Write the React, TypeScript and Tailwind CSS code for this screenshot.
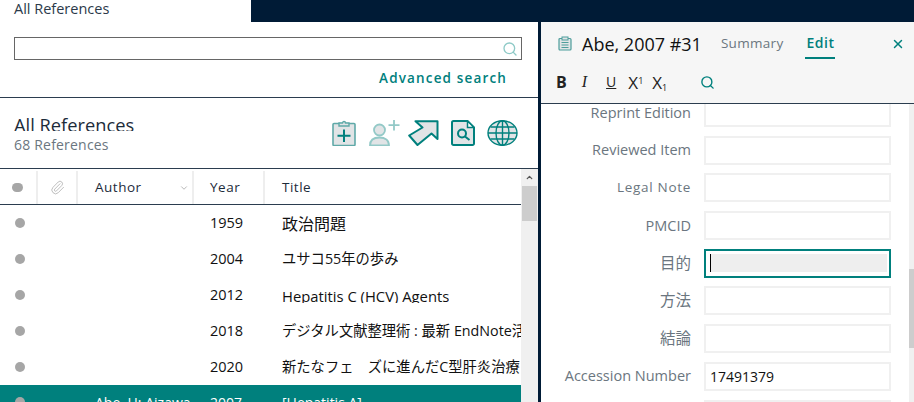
import React from "react";
import {Search, X, ChevronDown, ChevronUp, Paperclip} from "lucide-react";

const FONT = "font-['Open_Sans','Noto_Sans_CJK_JP',sans-serif]";

const rows = [
    {year: "1959", title: "政治問題", cls: "text-[16px] pt-[1px]"},
    {year: "2004", title: "ユサコ55年の歩み", cls: "text-[14.300px]"},
    {year: "2012", title: "Hepatitis C (HCV) Agents", cls: "text-[14.800px] h-[15px] leading-[16px] overflow-hidden"},
    {year: "2018", title: "デジタル文献整理術 : 最新 EndNote活用", cls: "text-[14.300px]"},
    {year: "2020", title: "新たなフェ　ズに進んだC型肝炎治療", cls: "text-[14.300px]"},
];

const fields = [
    {label: "Reprint Edition"},
    {label: "Reviewed Item"},
    {label: "Legal Note", cls: "text-[13.500px] tracking-[0.7px] pb-[1px]"},
    {label: "PMCID"},
    {label: "目的", cls: "text-[15.500px]", active: true},
    {label: "方法", cls: "text-[15.500px]"},
    {label: "結論", cls: "text-[15.500px]"},
    {label: "Accession Number", value: "17491379"},
    {label: ""},
];

function AddIcon() {
    return (
        <svg width="24" height="26" viewBox="0 0 24 26" className="shrink-0">
            <rect x="1" y="3.500" width="22" height="22" rx="1" fill="#e1e4e6" stroke="#5fa9a8" strokeWidth="1.600"/>
            <path d="M7 6V3h3.500a1.500 1.500 0 0 1 3 0H17v3z" fill="#e1e4e6" stroke="#5fa9a8" strokeWidth="1.400"/>
            <path d="M12 9.500v12.500M5.500 15.800h13" stroke="#00807d" strokeWidth="2"/>
        </svg>
    );
}

function UserAddIcon() {
    return (
        <svg width="31" height="26" viewBox="0 0 31 26" className="ml-[13px] shrink-0">
            <circle cx="10.500" cy="10" r="5.500" fill="#e1e4e6" stroke="#93c9c7" strokeWidth="1.800"/>
            <path d="M1 25.500c0-5.500 4-8 9.500-8s9.500 2.500 9.500 8z" fill="#e1e4e6" stroke="#93c9c7" strokeWidth="1.800"/>
            <path d="M25 0v10.500M19.500 5.200h11" stroke="#93c9c7" strokeWidth="1.800"/>
        </svg>
    );
}

function ShareIcon() {
    return (
        <svg width="31" height="26" viewBox="0 0 31 26" className="ml-[8px] shrink-0">
            <path d="M7.500 1.200H29.500V19L23.500 13.500L9.500 25L1.200 15.500L14.500 7.500Z" fill="#e1e4e6" stroke="#00807d" strokeWidth="2" strokeLinejoin="round"/>
        </svg>
    );
}

function DocSearchIcon() {
    return (
        <svg width="24" height="26" viewBox="0 0 24 26" className="ml-[12px] shrink-0">
            <path d="M2.500 1H16.500L23 7.500V23.500a1.500 1.500 0 0 1-1.500 1.500H2.500A1.500 1.500 0 0 1 1 23.500V2.500A1.500 1.500 0 0 1 2.500 1z" fill="#e1e4e6" stroke="#00807d" strokeWidth="2"/>
            <path d="M16.500 1V7.500H23z" fill="#fff" stroke="#00807d" strokeWidth="1.500"/>
            <circle cx="11" cy="13.500" r="4" fill="none" stroke="#00807d" strokeWidth="2"/>
            <path d="M14 16.500l4.500 3.500" stroke="#00807d" strokeWidth="2"/>
        </svg>
    );
}

function GlobeIcon() {
    return (
        <svg width="31" height="26" viewBox="0 0 31 26" fill="none" stroke="#00807d" strokeWidth="1.400" className="ml-[12px] shrink-0">
            <ellipse cx="15.500" cy="13" rx="14.500" ry="12.300" fill="#e1e4e6"/>
            <ellipse cx="15.500" cy="13" rx="6.500" ry="12.300"/>
            <path d="M15.500 1v24M1 13h29M3.500 7h24M3.500 19h24"/>
        </svg>
    );
}

function ClipboardSmall() {
    return (
        <svg width="14" height="15" viewBox="0 0 14 15">
            <rect x="1" y="2.500" width="12" height="11.500" rx="1" fill="#e1e4e6" stroke="#4d9d9b" strokeWidth="1.200"/>
            <rect x="4" y="1" width="6" height="3" fill="#e1e4e6" stroke="#4d9d9b"/>
            <path d="M3.500 6.500h7M3.500 9h7M3.500 11.500h7" stroke="#4d9d9b"/>
        </svg>
    );
}

export default function App() {
    return (
        <div className={`${FONT} w-[914px] h-[402px] overflow-hidden bg-white flex flex-col text-[#111]`}>

            {/* TOP BAR */}
            <div className="h-[22px] shrink-0 flex bg-[#001b36]">
                <div className="w-[251px] bg-white pl-[14px] text-[14.500px] leading-[18px] text-[#2b3a4a]">
                    All References
                </div>
            </div>

            <div className="flex flex-1 min-h-0">

                {/* LEFT */}
                <div className="w-[538px] shrink-0 flex flex-col">

                    <div className="h-[76px] shrink-0 border-b border-[#2b3d4f] px-[14px] pt-[15px]">
                        <div className="w-[508px] h-[23px] border border-[#666] flex items-center justify-end pr-[3px]">
                            <Search size={16} strokeWidth={2} className="text-[#8ecac7]"/>
                        </div>
                        <p className="mt-[9px] pr-[17px] text-right text-[13.500px] leading-[18px] font-semibold tracking-[1.150px] text-[#00807d]">
                            Advanced search
                        </p>
                    </div>

                    <div className="h-[71px] shrink-0 flex justify-between border-b border-[#2b3d4f] pl-[14px] pr-[20px]">
                        <div className="pt-[16px]">
                            <p className="h-[17px] overflow-hidden text-[18.300px] leading-[21px] text-[#1c2b3a]">All References</p>
                            <p className="mt-[5px] text-[14px] leading-[18px] tracking-[0.2px] text-[#6b7680]">68 References</p>
                        </div>
                        <div className="flex items-start pt-[22px]">
                            <AddIcon/>
                            <UserAddIcon/>
                            <ShareIcon/>
                            <DocSearchIcon/>
                            <GlobeIcon/>
                        </div>
                    </div>

                    <div className="flex flex-1 min-h-0">

                        <div className="w-[521px] shrink-0 overflow-hidden">

                            {/* HEADER */}
                            <div className="h-[36px] pt-[2px] border-b border-[#2b3d4f] flex items-center text-[13.500px] tracking-[0.5px] text-[#1c2b3a]">
                                <div className="w-[38px] h-full flex items-center justify-center border-r-2 border-[#eee]">
                                    <span className="w-[11px] h-[9px] rounded-full bg-[#a6a6a6] -ml-[2px]"/>
                                </div>
                                <div className="w-[40px] h-full flex items-center justify-center border-r-2 border-[#eee]">
                                    <Paperclip size={15} strokeWidth={1.200} className="text-[#aaa]"/>
                                </div>
                                <div className="w-[116px] h-full flex items-center justify-between pl-[17px] pr-[3px] border-r-2 border-[#eee]">
                                    <span>Author</span>
                                    <ChevronDown size={10} className="text-[#aaa]"/>
                                </div>
                                <div className="w-[71px] h-full flex items-center pl-[16px] border-r-2 border-[#eee]">Year</div>
                                <div className="pl-[17px]">Title</div>
                            </div>

                            {/* ROWS */}
                            {rows.map((row) => (
                                <div key={row.year} className="h-[36px] flex items-center text-[14.500px] whitespace-nowrap">
                                    <div className="w-[40px] pl-[15px] shrink-0">
                                        <span className="block w-[10px] h-[10px] rounded-full bg-[#a6a6a6]"/>
                                    </div>
                                    <div className="w-[170px] shrink-0"/>
                                    <div className="w-[72px] shrink-0">{row.year}</div>
                                    <div className={row.cls}>{row.title}</div>
                                </div>
                            ))}

                            <div className="h-[36px] bg-[#00807d] flex items-center pb-[2px] text-[14px] text-white whitespace-nowrap">
                                <div className="w-[40px] pl-[15px] shrink-0">
                                    <span className="block w-[10px] h-[10px] rounded-full bg-[#a6a6a6]"/>
                                </div>
                                <div className="w-[55px] shrink-0"/>
                                <div className="w-[115px] shrink-0 overflow-hidden">Abe, H; Aizawa</div>
                                <div className="w-[72px] shrink-0">2007</div>
                                <div>[Hepatitis A]</div>
                            </div>
                        </div>

                        {/* SCROLLBAR */}
                        <div className="w-[17px] shrink-0 bg-[#f0f0f0] flex flex-col">
                            <div className="h-[17px] flex items-center justify-center">
                                <ChevronUp size={9} strokeWidth={3.500} className="text-[#555]"/>
                            </div>
                            <div className="h-[35px] bg-[#cdcdcd] mx-[1px]"/>
                        </div>
                    </div>
                </div>

                {/* RIGHT */}
                <div className="flex-1 min-w-0 border-l-[3px] border-[#001b36] flex flex-col">

                    <div className="h-[82px] shrink-0 bg-[#f6f6f6] border-b border-[#2b3d4f]">
                        <div className="h-[43px] flex items-center pl-[17px] pr-[9px]">
                            <ClipboardSmall/>
                            <span className="ml-[10px] text-[18px] leading-[24px]">Abe, 2007 #31</span>
                            <span className="ml-[19px] text-[13.500px] tracking-[0.3px] text-[#6b7680]">Summary</span>
                            <div className="ml-[22px] self-start h-[37px] pt-[12px] border-b-2 border-[#00807d] px-[1px] text-[14px] leading-[18px] font-semibold tracking-[0.5px] text-[#00807d]">
                                Edit
                            </div>
                            <X size={14} strokeWidth={2.500} className="ml-auto text-[#00807d]"/>
                        </div>
                        <div className="flex items-center h-[18px] mt-[8px] pl-[15px] text-[#222]">
                            <span className="text-[16px] font-bold leading-none">B</span>
                            <span className="ml-[15px] text-[16px] italic leading-none font-['Liberation_Serif',serif]">I</span>
                            <span className="ml-[19px] text-[14px] underline leading-none">U</span>
                            <span className="ml-[12px] text-[17px] leading-none">X<sup className="text-[9px]">1</sup></span>
                            <span className="ml-[9px] text-[17px] leading-none">X<sub className="text-[9px]">1</sub></span>
                            <Search size={15} strokeWidth={2.200} className="ml-[33px] text-[#00807d]"/>
                        </div>
                    </div>

                    <div className="flex flex-1 min-h-0">
                        <div className="flex-1 overflow-hidden">
                            <div className="-mt-[6px] flex flex-col gap-[8.700px]">
                                {fields.map((field, i) => (
                                    <div key={i} className="h-[29px] flex items-center shrink-0">
                                        <div className={`w-[150px] shrink-0 text-right text-[#6b7680] ${field.cls ?? "text-[14.500px]"}`}>
                                            {field.label}
                                        </div>
                                        <div className={`ml-[13px] w-[187px] h-full flex items-center pl-[4px] border-2 ${field.active ? "border-[#00807d]" : "border-[#f0f0f0]"}`}>
                                            {field.active && (
                                                <div className="w-full h-[18px] mr-[2px] bg-[#eeeeee] border-l border-black"/>
                                            )}
                                            {field.value && (
                                                <span className="text-[14px] text-[#111]">{field.value}</span>
                                            )}
                                        </div>
                                    </div>
                                ))}
                            </div>
                        </div>
                        <div className="w-[5px] shrink-0 bg-[#f0f0f0] flex flex-col">
                            <div className="h-[165px] shrink-0"/>
                            <div className="h-[79px] bg-[#cdcdcd]"/>
                        </div>
                    </div>
                </div>

            </div>
        </div>
    );
}
